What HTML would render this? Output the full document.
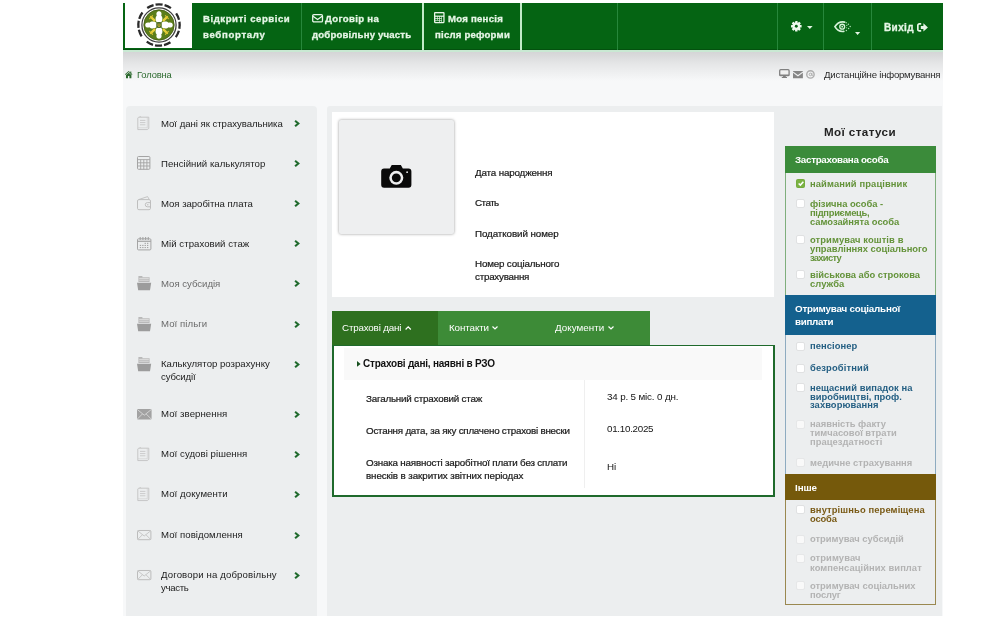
<!DOCTYPE html>
<html lang="uk"><head><meta charset="utf-8"><title>Пенсійний фонд — особистий кабінет</title>
<style>
*{box-sizing:border-box}
html,body{margin:0;padding:0}
body{width:992px;height:621px;background:#fff;position:relative;overflow:hidden;font-family:"Liberation Sans",sans-serif;color:#222}
.a{position:absolute}
.t{position:absolute;white-space:nowrap;line-height:1;will-change:transform}
svg{position:absolute;overflow:visible}
#wrap{left:123px;top:50px;width:820px;height:566px;background:#f7f8f9}
#grad{left:123px;top:51px;width:820px;height:30px;background:linear-gradient(#d3d4d5,#e6e7e8 45%,#f7f8f9)}
#mint{left:123px;top:50.4px;width:820px;height:1.4px;background:#c9e9d3}
#hdark{left:123px;top:48.6px;width:820px;height:1.8px;background:#04510f}
#hdr{left:123px;top:3px;width:820px;height:47px;background:#056413}
#logo{left:125px;top:3px;width:67px;height:45.4px;background:#fff}
.sep{position:absolute;top:3px;width:1px;height:47px;background:#27873b}
.sep.br{background:#c2ebc9;width:2px}
#lside{left:126px;top:105.5px;width:191px;height:510.5px;background:#eceeef;border-radius:4px 4px 0 0}
#center{left:327px;top:105.5px;width:448.5px;height:510.5px;background:#eceeef;border-radius:3px 0 0 0}
#rside{left:775px;top:105.5px;width:167px;height:510.5px;background:#eceeef}
#card{left:332px;top:112px;width:442px;height:184.5px;background:#fff}
#photo{left:338.8px;top:120px;width:115.6px;height:113.8px;background:#eeeff0;border-radius:2px;box-shadow:0 0 3px rgba(0,0,0,.42)}
#tabs{left:332px;top:311.2px;width:318px;height:34.5px;background:#3d8b37}
#tab1{left:332px;top:311.2px;width:105.5px;height:34.5px;background:#2e701f}
#panel{left:332px;top:345.2px;width:442.5px;height:152.3px;background:#fff;border:2px solid #1f6a2c;border-top-width:1px;border-bottom-width:2.5px}
#phead{left:344px;top:347.5px;width:418px;height:32.5px;background:#f9f9f9}
#vdiv{left:584.2px;top:380px;width:1px;height:108px;background:#efefef}
.sec{position:absolute;left:784.5px;width:151.5px}
.cb{position:absolute;left:796px;width:9px;height:9px;background:#fff;border:1px solid #e0e1e2;border-radius:2px}
.cb.dis{border-color:#e6e7e8;background:#f9f9f9}
</style></head><body>
<div class="a" id="wrap"></div><div class="a" id="grad"></div>
<div class="a" id="hdr"></div><div class="a" id="hdark"></div><div class="a" id="mint"></div><div class="a" id="logo"></div>
<div class="sep" style="left:300.7px"></div><div class="sep br" style="left:422px"></div><div class="sep br" style="left:520.3px"></div>
<div class="sep" style="left:617.3px"></div><div class="sep" style="left:777.3px"></div><div class="sep" style="left:823.3px"></div><div class="sep" style="left:871.2px"></div>
<div class="a" id="lside"></div><div class="a" id="center"></div><div class="a" id="rside"></div>
<div class="a" id="card"></div><div class="a" id="photo"></div>
<div class="a" id="tabs"></div><div class="a" id="tab1"></div><div class="a" id="panel"></div><div class="a" id="phead"></div><div class="a" id="vdiv"></div>
<!-- right status boxes -->
<div class="sec" style="top:145.5px;height:149px;border:1px solid #7fae7c;border-bottom:0;background:#eceeef"></div>
<div class="sec" style="top:145.5px;height:27px;background:#3b8b3a"></div>
<div class="sec" style="top:294.5px;height:180px;border:1px solid #8eabc0;border-bottom:0;background:#eceeef"></div>
<div class="sec" style="top:294.5px;height:40.5px;background:#14618e"></div>
<div class="sec" style="top:473.7px;height:131.4px;border:1px solid #9a8850;background:#eceeef"></div>
<div class="sec" style="top:473.7px;height:26.8px;background:#75590b"></div>
<!-- logo -->
<svg style="left:136px;top:2px" width="46" height="46" viewBox="-23 -23 46 46">
 <circle r="20.7" fill="none" stroke="#2a2a2a" stroke-width="2.3" stroke-dasharray="7 2 7 2 7 7.515" transform="rotate(-124.6)"/>
 <circle r="17.1" fill="none" stroke="#3c3c3c" stroke-width="1.25"/>
 <circle r="15.2" fill="#5b7d1a" stroke="#445c16" stroke-width="0.8"/>
 <g fill="#fff">
  <path d="M0-13.8C2.6-13.8 3-11 2.2-9.6C4-8 3.8-4.4 2-2.4H-2C-3.8-4.4-4-8-2.2-9.6C-3-11-2.6-13.8 0-13.8Z"/>
  <path d="M0-13.8C2.6-13.8 3-11 2.2-9.6C4-8 3.8-4.4 2-2.4H-2C-3.8-4.4-4-8-2.2-9.6C-3-11-2.6-13.8 0-13.8Z" transform="rotate(90)"/>
  <path d="M0-13.8C2.6-13.8 3-11 2.2-9.6C4-8 3.8-4.4 2-2.4H-2C-3.8-4.4-4-8-2.2-9.6C-3-11-2.6-13.8 0-13.8Z" transform="rotate(180)"/>
  <path d="M0-13.8C2.6-13.8 3-11 2.2-9.6C4-8 3.8-4.4 2-2.4H-2C-3.8-4.4-4-8-2.2-9.6C-3-11-2.6-13.8 0-13.8Z" transform="rotate(270)"/>
 </g>
 <g stroke="#e6cf3a" stroke-width="2.4" stroke-linecap="round">
  <path d="M-8-8L-4.6-4.6M8-8L4.6-4.6M-8 8L-4.6 4.6M8 8L4.6 4.6"/>
 </g>
 <g stroke="#d9bf2e" stroke-width="1.1" stroke-linecap="round"><path d="M-9.4-6.4L-6.4-9.4M9.4-6.4L6.4-9.4M-9.4 6.4L-6.4 9.4M9.4 6.4L6.4 9.4"/></g>
 <rect x="-2.6" y="-2.9" width="5.2" height="5.8" rx="1.6" fill="#4b6c2c"/><path d="M-1.1-1.4V1L0 1.9L1.1 1V-1.4M0-1.6V1.8" fill="none" stroke="#c9b22f" stroke-width=".7"/>
</svg>
<!-- header: envelope outline -->
<svg style="left:312px;top:14.3px" width="11.2" height="8.6" viewBox="0 0 11.2 8.6"><rect x=".7" y=".7" width="9.8" height="7.2" rx="1.2" fill="none" stroke="#eaf6ea" stroke-width="1.3"/><path d="M1 2.2L5.6 5.6L10.2 2.2" fill="none" stroke="#eaf6ea" stroke-width="1.2"/></svg>
<!-- header: calculator -->
<svg style="left:434.3px;top:12.4px" width="10.6" height="11.2" viewBox="0 0 10 10" preserveAspectRatio="none"><rect width="10" height="10" rx="1" fill="#eaf6ea"/><rect x="1.2" y="1.2" width="7.6" height="2" fill="#056413"/><g fill="#056413"><rect x="1.3" y="4.3" width="1.5" height="1.2"/><rect x="3.4" y="4.3" width="1.5" height="1.2"/><rect x="5.5" y="4.3" width="1.5" height="1.2"/><rect x="7.5" y="4.3" width="1.3" height="4.6"/><rect x="1.3" y="6.1" width="1.5" height="1.2"/><rect x="3.4" y="6.1" width="1.5" height="1.2"/><rect x="5.5" y="6.1" width="1.5" height="1.2"/><rect x="1.3" y="7.8" width="3.6" height="1.1"/><rect x="5.5" y="7.8" width="1.5" height="1.1"/></g></svg>
<!-- gear -->
<svg style="left:790.7px;top:21.4px" width="10.6" height="10.6" viewBox="-5.3 -5.3 10.6 10.6"><g fill="#eefaee"><circle r="3.75"/><rect x="-1.25" y="-5.3" width="2.5" height="10.6" rx=".5"/><rect x="-1.25" y="-5.3" width="2.5" height="10.6" rx=".5" transform="rotate(45)"/><rect x="-1.25" y="-5.3" width="2.5" height="10.6" rx=".5" transform="rotate(90)"/><rect x="-1.25" y="-5.3" width="2.5" height="10.6" rx=".5" transform="rotate(135)"/></g><circle r="1.45" fill="#056413"/></svg>
<svg style="left:806.8px;top:26.2px" width="5.6" height="3" viewBox="0 0 5.6 3"><path d="M0 0H5.6L2.8 3Z" fill="#e3f5e3"/></svg>
<!-- eye low vision -->
<svg style="left:834px;top:21.2px" width="17.4" height="11.4" viewBox="0 0 17.4 11.4"><path d="M10.6 1.1C6.2 .4 2.6 3 .9 5.7C2.6 8.6 6 10.9 9.8 10.4" fill="none" stroke="#d6f2d8" stroke-width="1.7" stroke-linecap="round"/><circle cx="8.2" cy="5.7" r="2.45" fill="none" stroke="#d6f2d8" stroke-width="1.3"/><circle cx="8.2" cy="5.7" r=".9" fill="#d6f2d8"/><g fill="#a9dcae"><circle cx="12.2" cy="1.7" r=".75"/><circle cx="14.4" cy="3.2" r=".75"/><circle cx="16.2" cy="5.4" r=".75"/><circle cx="12.8" cy="4.4" r=".6"/><circle cx="14.6" cy="7.6" r=".75"/><circle cx="12.4" cy="9.6" r=".75"/><circle cx="12.6" cy="6.8" r=".55"/></g></svg>
<svg style="left:855.4px;top:32px" width="5.2" height="3" viewBox="0 0 5.2 3"><path d="M0 0H5.2L2.6 3Z" fill="#e3f5e3"/></svg>
<!-- sign-out -->
<svg style="left:917px;top:22.6px" width="11" height="8.8" viewBox="0 0 11 8.8"><path d="M4.2 .85H2.3A1.45 1.45 0 0 0 .85 2.3V6.5A1.45 1.45 0 0 0 2.3 7.95H4.2" fill="none" stroke="#e6f6e6" stroke-width="1.7"/><path d="M3.8 2.9H6.4V.3L10.9 4.4L6.4 8.5V5.9H3.8Z" fill="#e6f6e6"/></svg>
<!-- home -->
<svg style="left:125.4px;top:70.6px" width="7.4" height="7.2" viewBox="0 0 7.4 7.2"><path d="M3.7 0L0 3.3L.5 3.9L3.7 1.1L6.9 3.9L7.4 3.3L6.3 2.3V.5H5.3V1.4Z" fill="#2c6a2f"/><path d="M3.7 1.8L1 4.1V7.2H3V5.1H4.4V7.2H6.4V4.1Z" fill="#2c6a2f"/></svg>
<!-- monitor, mail, at -->
<svg style="left:779px;top:69.2px" width="10.8" height="9" viewBox="0 0 10.8 9"><rect x=".7" y=".7" width="9.4" height="6" rx="1" fill="#f0f0f0" stroke="#808080" stroke-width="1.3"/><path d="M.7 5.4H10.1V6.2A.6 .6 0 0 1 9.5 6.8H1.3A.6 .6 0 0 1 .7 6.2Z" fill="#808080"/><path d="M4.2 7H6.6L7 8.1H8V9H2.8V8.1H3.8Z" fill="#808080"/></svg>
<svg style="left:793.2px;top:70.8px" width="9.9" height="7.2" viewBox="0 0 9.9 7.2"><path d="M0 .5L4.95 4.1L9.9 .5V0H0Z" fill="#868686"/><path d="M0 1.8V7.2H9.9V1.8L4.95 5.4Z" fill="#868686"/></svg>
<svg style="left:806.2px;top:69.7px" width="8.9" height="8.9" viewBox="-4.45 -4.45 8.9 8.9"><circle r="3.7" fill="none" stroke="#adadad" stroke-width="1.4"/><circle r="1.3" fill="none" stroke="#adadad" stroke-width="1"/><path d="M1.4-1.5V.6Q1.6 1.6 2.8 1.2" fill="none" stroke="#adadad" stroke-width=".9"/></svg>
<!-- camera -->
<svg style="left:381.2px;top:165px" width="30.6" height="22.8" viewBox="0 0 31 23.4"><path d="M10.8 0H20.2L22.2 3.6H28A3 3 0 0 1 31 6.6V20.4A3 3 0 0 1 28 23.4H3A3 3 0 0 1 0 20.4V6.6A3 3 0 0 1 3 3.6H8.8Z" fill="#0a0a0a"/><circle cx="15.5" cy="13.2" r="7.2" fill="#eeeff0"/><circle cx="15.5" cy="13.2" r="4.6" fill="#0a0a0a"/><circle cx="26.6" cy="7.4" r=".9" fill="#eeeff0"/></svg>
<!-- tab chevrons -->
<svg style="left:405px;top:325.6px" width="6.4" height="4" viewBox="0 0 6.4 4"><path d="M.6 3.5L3.2 .9L5.8 3.5" fill="none" stroke="#fff" stroke-width="1.2"/></svg>
<svg style="left:492.2px;top:325.8px" width="6" height="3.8" viewBox="0 0 6 3.8"><path d="M.5 .5L3 3L5.5 .5" fill="none" stroke="#fff" stroke-width="1.2"/></svg>
<svg style="left:607.8px;top:325.8px" width="6" height="3.8" viewBox="0 0 6 3.8"><path d="M.5 .5L3 3L5.5 .5" fill="none" stroke="#fff" stroke-width="1.2"/></svg>
<svg style="left:357px;top:360.6px" width="3.6" height="5.8" viewBox="0 0 3.6 5.8"><path d="M0 0L3.6 2.9L0 5.8Z" fill="#17501f"/></svg>

<svg style="left:137px;top:116.3px" width="12.6" height="14.2" viewBox="0 0 12.6 14.2"><path d="M1.6 1.2H11.8V12.4L10.2 13.6H.8V2Z" fill="none" stroke="#c2c2c2" stroke-width=".9"/><path d="M2.6 1.2L3.2 .3L4 1.2" fill="none" stroke="#c2c2c2" stroke-width=".7"/><path d="M10.3 1.6V11.8H1.2" fill="none" stroke="#c2c2c2" stroke-width=".5"/><path d="M3 4.4H8.4M3 6.6H8.4M3 8.8H8.4" stroke="#c2c2c2" stroke-width=".8"/></svg>
<svg style="left:136.8px;top:156.3px" width="13.4" height="13.8" viewBox="0 0 13.4 13.8"><rect x=".5" y=".5" width="12.4" height="12.8" rx="1" fill="none" stroke="#a4a4a4" stroke-width="1"/><path d="M.5 3.6H12.9M.5 6.8H12.9M.5 10H12.9M3.7 3.6V13.3M6.8 3.6V13.3M9.9 3.6V13.3" stroke="#a4a4a4" stroke-width=".9"/></svg>
<svg style="left:136.8px;top:196.4px" width="15.2" height="14.2" viewBox="0 0 15.2 14.2"><rect x=".5" y="3.6" width="13" height="10.1" rx="1.4" fill="none" stroke="#bebebe" stroke-width="1"/><path d="M1.6 3.6L10.6 .6L12.2 3.4" fill="none" stroke="#bebebe" stroke-width=".9"/><path d="M13.5 6.6H10.4A2 2 0 0 0 10.4 10.8H13.5" fill="none" stroke="#bebebe" stroke-width="1"/><circle cx="10.8" cy="8.7" r=".7" fill="#bebebe"/></svg>
<svg style="left:137px;top:237px" width="14.4" height="13.4" viewBox="0 0 14.4 13.4"><rect x=".5" y="1.8" width="13.4" height="11.1" rx="1" fill="none" stroke="#a4a4a4" stroke-width="1"/><path d="M.5 4.3H13.9" stroke="#a4a4a4" stroke-width="1.2"/><path d="M3.2 0V3M5.9 0V3M8.6 0V3M11.3 0V3" stroke="#a4a4a4" stroke-width="1.1"/><g fill="#a4a4a4"><rect x="7.6" y="5.8" width="1.3" height="1.1"/><rect x="10" y="5.8" width="1.3" height="1.1"/><rect x="2.8" y="7.9" width="1.3" height="1.1"/><rect x="5.2" y="7.9" width="1.3" height="1.1"/><rect x="7.6" y="7.9" width="1.3" height="1.1"/><rect x="10" y="7.9" width="1.3" height="1.1"/><rect x="2.8" y="10" width="1.3" height="1.1"/><rect x="5.2" y="10" width="1.3" height="1.1"/><rect x="7.6" y="10" width="1.3" height="1.1"/><rect x="10" y="10" width="1.3" height="1.1"/></g></svg>
<svg style="left:137.2px;top:276.4px" width="14.2" height="14.2" viewBox="0 0 14.2 14.2"><path d="M1.4 0H5.4V1.2H12.6V6H1.4Z" fill="#b9b9b9"/><path d="M2.2 2.4H11.8M2.2 4.2H11.8" stroke="#e6e6e6" stroke-width=".8"/><path d="M0 6.8H14.2L13 14.2H1.2Z" fill="#9c9c9c"/></svg>
<svg style="left:137.2px;top:317px" width="14.2" height="14.2" viewBox="0 0 14.2 14.2"><path d="M1.4 0H5.4V1.2H12.6V6H1.4Z" fill="#b9b9b9"/><path d="M2.2 2.4H11.8M2.2 4.2H11.8" stroke="#e6e6e6" stroke-width=".8"/><path d="M0 6.8H14.2L13 14.2H1.2Z" fill="#9c9c9c"/></svg>
<svg style="left:137.2px;top:357px" width="14.2" height="14.2" viewBox="0 0 14.2 14.2"><path d="M1.4 0H5.4V1.2H12.6V6H1.4Z" fill="#b9b9b9"/><path d="M2.2 2.4H11.8M2.2 4.2H11.8" stroke="#e6e6e6" stroke-width=".8"/><path d="M0 6.8H14.2L13 14.2H1.2Z" fill="#9c9c9c"/></svg>
<svg style="left:137px;top:409px" width="14.6" height="10.4" viewBox="0 0 14.6 10.4"><rect width="14.6" height="10.4" rx="1" fill="#a2a2a2"/><path d="M.4 .6L7.3 6.2L14.2 .6M.4 10L5.4 5M14.2 10L9.2 5" fill="none" stroke="#dedede" stroke-width=".8"/></svg>
<svg style="left:137px;top:447.3px" width="12.6" height="14.2" viewBox="0 0 12.6 14.2"><path d="M1.6 1.2H11.8V12.4L10.2 13.6H.8V2Z" fill="none" stroke="#c2c2c2" stroke-width=".9"/><path d="M2.6 1.2L3.2 .3L4 1.2" fill="none" stroke="#c2c2c2" stroke-width=".7"/><path d="M10.3 1.6V11.8H1.2" fill="none" stroke="#c2c2c2" stroke-width=".5"/><path d="M3 4.4H8.4M3 6.6H8.4M3 8.8H8.4" stroke="#c2c2c2" stroke-width=".8"/></svg>
<svg style="left:137px;top:487.3px" width="12.6" height="14.2" viewBox="0 0 12.6 14.2"><path d="M1.6 1.2H11.8V12.4L10.2 13.6H.8V2Z" fill="none" stroke="#c2c2c2" stroke-width=".9"/><path d="M2.6 1.2L3.2 .3L4 1.2" fill="none" stroke="#c2c2c2" stroke-width=".7"/><path d="M10.3 1.6V11.8H1.2" fill="none" stroke="#c2c2c2" stroke-width=".5"/><path d="M3 4.4H8.4M3 6.6H8.4M3 8.8H8.4" stroke="#c2c2c2" stroke-width=".8"/></svg>
<svg style="left:137px;top:530px" width="14.4" height="10.2" viewBox="0 0 14.4 10.2"><rect x=".5" y=".5" width="13.4" height="9.2" rx="1" fill="none" stroke="#bcbcbc" stroke-width="1"/><path d="M.8 .9L7.2 6L13.6 .9M.8 9.4L5.4 4.8M13.6 9.4L9 4.8" fill="none" stroke="#bcbcbc" stroke-width=".8"/></svg>
<svg style="left:137px;top:570px" width="14.4" height="10.2" viewBox="0 0 14.4 10.2"><rect x=".5" y=".5" width="13.4" height="9.2" rx="1" fill="none" stroke="#bcbcbc" stroke-width="1"/><path d="M.8 .9L7.2 6L13.6 .9M.8 9.4L5.4 4.8M13.6 9.4L9 4.8" fill="none" stroke="#bcbcbc" stroke-width=".8"/></svg>
<svg style="left:294.1px;top:120.0px" width="5.9" height="7" viewBox="0 0 5.4 6.4"><path d="M1 .6L4 3.2L1 5.8" fill="none" stroke="#1f6a2c" stroke-width="1.9"/></svg>
<svg style="left:294.1px;top:160.2px" width="5.9" height="7" viewBox="0 0 5.4 6.4"><path d="M1 .6L4 3.2L1 5.8" fill="none" stroke="#1f6a2c" stroke-width="1.9"/></svg>
<svg style="left:294.1px;top:200.2px" width="5.9" height="7" viewBox="0 0 5.4 6.4"><path d="M1 .6L4 3.2L1 5.8" fill="none" stroke="#1f6a2c" stroke-width="1.9"/></svg>
<svg style="left:294.1px;top:240.2px" width="5.9" height="7" viewBox="0 0 5.4 6.4"><path d="M1 .6L4 3.2L1 5.8" fill="none" stroke="#1f6a2c" stroke-width="1.9"/></svg>
<svg style="left:294.1px;top:280.2px" width="5.9" height="7" viewBox="0 0 5.4 6.4"><path d="M1 .6L4 3.2L1 5.8" fill="none" stroke="#1f6a2c" stroke-width="1.9"/></svg>
<svg style="left:294.1px;top:320.7px" width="5.9" height="7" viewBox="0 0 5.4 6.4"><path d="M1 .6L4 3.2L1 5.8" fill="none" stroke="#1f6a2c" stroke-width="1.9"/></svg>
<svg style="left:294.1px;top:360.7px" width="5.9" height="7" viewBox="0 0 5.4 6.4"><path d="M1 .6L4 3.2L1 5.8" fill="none" stroke="#1f6a2c" stroke-width="1.9"/></svg>
<svg style="left:294.1px;top:411.0px" width="5.9" height="7" viewBox="0 0 5.4 6.4"><path d="M1 .6L4 3.2L1 5.8" fill="none" stroke="#1f6a2c" stroke-width="1.9"/></svg>
<svg style="left:294.1px;top:451.0px" width="5.9" height="7" viewBox="0 0 5.4 6.4"><path d="M1 .6L4 3.2L1 5.8" fill="none" stroke="#1f6a2c" stroke-width="1.9"/></svg>
<svg style="left:294.1px;top:491.0px" width="5.9" height="7" viewBox="0 0 5.4 6.4"><path d="M1 .6L4 3.2L1 5.8" fill="none" stroke="#1f6a2c" stroke-width="1.9"/></svg>
<svg style="left:294.1px;top:531.5px" width="5.9" height="7" viewBox="0 0 5.4 6.4"><path d="M1 .6L4 3.2L1 5.8" fill="none" stroke="#1f6a2c" stroke-width="1.9"/></svg>
<svg style="left:294.1px;top:571.5px" width="5.9" height="7" viewBox="0 0 5.4 6.4"><path d="M1 .6L4 3.2L1 5.8" fill="none" stroke="#1f6a2c" stroke-width="1.9"/></svg>
<div class="cb" style="top:179px;background:#7bb242;border-color:#74ab3c;border-radius:1.5px"></div>
<svg style="left:797.5px;top:181.2px" width="6" height="5" viewBox="0 0 5.6 4.6"><path d="M.6 2.3L2.2 3.8L5 .7" fill="none" stroke="#fff" stroke-width="1.4"/></svg>
<div class="cb" style="top:198.6px"></div>
<div class="cb" style="top:234.5px"></div>
<div class="cb" style="top:270.2px"></div>
<div class="cb" style="top:342px"></div>
<div class="cb" style="top:363.8px"></div>
<div class="cb" style="top:383.2px"></div>
<div class="cb" style="top:505px"></div>
<div class="cb dis" style="top:419.5px"></div>
<div class="cb dis" style="top:458.2px"></div>
<div class="cb dis" style="top:534.5px"></div>
<div class="cb dis" style="top:554px"></div>
<div class="cb dis" style="top:581px"></div>
<header class="site-header">
<span class="t" style="left:203.2px;top:14px;font-size:9.6px;color:#e6f6e6;font-weight:bold;letter-spacing:0.543px;-webkit-text-stroke:0.3px #e6f6e6">Відкриті сервіси</span>
<span class="t" style="left:203.2px;top:30px;font-size:9.6px;color:#e6f6e6;font-weight:bold;letter-spacing:0.686px;-webkit-text-stroke:0.3px #e6f6e6">вебпорталу</span>
<span class="t" style="left:325.3px;top:14px;font-size:9.6px;color:#e6f6e6;font-weight:bold;letter-spacing:0.343px;-webkit-text-stroke:0.3px #e6f6e6">Договір на</span>
<span class="t" style="left:312.0px;top:30px;font-size:9.6px;color:#e6f6e6;font-weight:bold;letter-spacing:0.171px;-webkit-text-stroke:0.3px #e6f6e6">добровільну участь</span>
<span class="t" style="left:448.0px;top:14px;font-size:9.6px;color:#e6f6e6;font-weight:bold;letter-spacing:0.248px;-webkit-text-stroke:0.3px #e6f6e6">Моя пенсія</span>
<span class="t" style="left:435.0px;top:30px;font-size:9.6px;color:#e6f6e6;font-weight:bold;letter-spacing:0.214px;-webkit-text-stroke:0.3px #e6f6e6">після реформи</span>
<span class="t" style="left:883.5px;top:23px;font-size:10px;color:#e6f6e6;font-weight:bold;letter-spacing:0.388px;-webkit-text-stroke:0.3px #e6f6e6">Вихід</span>
</header>
<div class="breadcrumbs">
<span class="t" style="left:136.5px;top:70px;font-size:9.4px;color:#2c6a2f;letter-spacing:-0.132px">Головна</span>
<span class="t" style="left:824.0px;top:70px;font-size:9.6px;color:#2a2a2a;letter-spacing:-0.220px">Дистанційне інформування</span>
</div>
<nav class="side-menu">
<span class="t" style="left:161.2px;top:119px;font-size:9.6px;color:#1c1c1c;letter-spacing:-0.032px">Мої дані як страхувальника</span>
<span class="t" style="left:161.2px;top:159px;font-size:9.6px;color:#1c1c1c;letter-spacing:0.039px">Пенсійний калькулятор</span>
<span class="t" style="left:161.2px;top:199px;font-size:9.6px;color:#1c1c1c;letter-spacing:-0.040px">Моя заробітна плата</span>
<span class="t" style="left:161.2px;top:239px;font-size:9.6px;color:#1c1c1c;letter-spacing:0.052px">Мій страховий стаж</span>
<span class="t" style="left:161.2px;top:279px;font-size:9.6px;color:#6a6a6a;letter-spacing:-0.014px">Моя субсидія</span>
<span class="t" style="left:161.2px;top:319px;font-size:9.6px;color:#6a6a6a;letter-spacing:0.074px">Мої пільги</span>
<span class="t" style="left:161.2px;top:359px;font-size:9.6px;color:#1c1c1c;letter-spacing:0.015px">Калькулятор розрахунку</span>
<span class="t" style="left:161.2px;top:372px;font-size:9.6px;color:#1c1c1c;letter-spacing:-0.143px">субсидії</span>
<span class="t" style="left:161.2px;top:409px;font-size:9.6px;color:#1c1c1c;letter-spacing:0.081px">Мої звернення</span>
<span class="t" style="left:161.2px;top:449px;font-size:9.6px;color:#1c1c1c;letter-spacing:0.063px">Мої судові рішення</span>
<span class="t" style="left:161.2px;top:489px;font-size:9.6px;color:#1c1c1c;letter-spacing:0.086px">Мої документи</span>
<span class="t" style="left:161.2px;top:530px;font-size:9.6px;color:#1c1c1c;letter-spacing:0.064px">Мої повідомлення</span>
<span class="t" style="left:161.2px;top:570px;font-size:9.6px;color:#1c1c1c;letter-spacing:0.140px">Договори на добровільну</span>
<span class="t" style="left:161.2px;top:583px;font-size:9.6px;color:#1c1c1c;letter-spacing:-0.305px">участь</span>
</nav>
<section class="profile-card">
<span class="t" style="left:474.5px;top:168px;font-size:9.8px;color:#1a1a1a;letter-spacing:-0.154px;-webkit-text-stroke:0.22px #1a1a1a">Дата народження</span>
<span class="t" style="left:474.5px;top:198px;font-size:9.8px;color:#1a1a1a;letter-spacing:-0.516px;-webkit-text-stroke:0.22px #1a1a1a">Стать</span>
<span class="t" style="left:474.5px;top:229px;font-size:9.8px;color:#1a1a1a;letter-spacing:-0.089px;-webkit-text-stroke:0.22px #1a1a1a">Податковий номер</span>
<span class="t" style="left:474.5px;top:259px;font-size:9.8px;color:#1a1a1a;letter-spacing:-0.168px;-webkit-text-stroke:0.22px #1a1a1a">Номер соціального</span>
<span class="t" style="left:474.5px;top:272px;font-size:9.8px;color:#1a1a1a;letter-spacing:-0.232px;-webkit-text-stroke:0.22px #1a1a1a">страхування</span>
</section>
<section class="insurance-tabs">
<span class="t" style="left:342.0px;top:323px;font-size:9.8px;color:#fff;letter-spacing:-0.182px">Страхові дані</span>
<span class="t" style="left:448.7px;top:323px;font-size:9.8px;color:#fff;letter-spacing:-0.094px">Контакти</span>
<span class="t" style="left:554.5px;top:323px;font-size:9.8px;color:#fff;letter-spacing:0.029px">Документи</span>
<span class="t" style="left:363.2px;top:359px;font-size:10px;color:#111;font-weight:bold;letter-spacing:-0.221px">Страхові дані, наявні в РЗО</span>
<span class="t" style="left:365.7px;top:394px;font-size:9.8px;color:#1a1a1a;letter-spacing:-0.198px;-webkit-text-stroke:0.22px #1a1a1a">Загальний страховий стаж</span>
<span class="t" style="left:365.7px;top:426px;font-size:9.8px;color:#1a1a1a;letter-spacing:-0.227px;-webkit-text-stroke:0.22px #1a1a1a">Остання дата, за яку сплачено страхові внески</span>
<span class="t" style="left:365.7px;top:458px;font-size:9.8px;color:#1a1a1a;letter-spacing:-0.188px;-webkit-text-stroke:0.22px #1a1a1a">Ознака наявності заробітної плати без сплати</span>
<span class="t" style="left:365.7px;top:471px;font-size:9.8px;color:#1a1a1a;letter-spacing:-0.093px;-webkit-text-stroke:0.22px #1a1a1a">внесків в закритих звітних періодах</span>
<span class="t" style="left:606.7px;top:392px;font-size:9.8px;color:#151515;letter-spacing:-0.148px">34 р. 5 міс. 0 дн.</span>
<span class="t" style="left:606.7px;top:424px;font-size:9.8px;color:#151515;letter-spacing:-0.275px">01.10.2025</span>
<span class="t" style="left:606.7px;top:462px;font-size:9.8px;color:#151515;letter-spacing:-0.133px">Ні</span>
</section>
<aside class="my-statuses">
<span class="t" style="left:824.0px;top:126px;font-size:11.6px;color:#222;font-weight:bold;letter-spacing:0.409px">Мої статуси</span>
<span class="t" style="left:795.2px;top:155px;font-size:9.8px;color:#fff;font-weight:bold;letter-spacing:-0.299px">Застрахована особа</span>
<span class="t" style="left:809.7px;top:179px;font-size:9.4px;color:#64933a;font-weight:bold;letter-spacing:0.110px">найманий працівник</span>
<span class="t" style="left:809.7px;top:199px;font-size:9.4px;color:#64933a;font-weight:bold;letter-spacing:-0.029px">фізична особа -</span>
<span class="t" style="left:809.7px;top:208px;font-size:9.4px;color:#64933a;font-weight:bold;letter-spacing:-0.294px">підприємець,</span>
<span class="t" style="left:809.7px;top:217px;font-size:9.4px;color:#64933a;font-weight:bold;letter-spacing:-0.015px">самозайнята особа</span>
<span class="t" style="left:809.7px;top:235px;font-size:9.4px;color:#64933a;font-weight:bold;letter-spacing:0.100px">отримувач коштів в</span>
<span class="t" style="left:809.7px;top:244px;font-size:9.4px;color:#64933a;font-weight:bold;letter-spacing:-0.012px">управліннях соціального</span>
<span class="t" style="left:809.7px;top:253px;font-size:9.4px;color:#64933a;font-weight:bold;letter-spacing:-0.712px">захисту</span>
<span class="t" style="left:809.7px;top:270px;font-size:9.4px;color:#64933a;font-weight:bold;letter-spacing:-0.028px">військова або строкова</span>
<span class="t" style="left:809.7px;top:279px;font-size:9.4px;color:#64933a;font-weight:bold;letter-spacing:0.045px">служба</span>
<span class="t" style="left:795.2px;top:304px;font-size:9.8px;color:#fff;font-weight:bold;letter-spacing:-0.202px">Отримувач соціальної</span>
<span class="t" style="left:795.2px;top:317px;font-size:9.8px;color:#fff;font-weight:bold;letter-spacing:-0.310px">виплати</span>
<span class="t" style="left:809.7px;top:341px;font-size:9.4px;color:#245f83;font-weight:bold;letter-spacing:0.068px">пенсіонер</span>
<span class="t" style="left:809.7px;top:363px;font-size:9.4px;color:#245f83;font-weight:bold;letter-spacing:0.137px">безробітний</span>
<span class="t" style="left:809.7px;top:383px;font-size:9.4px;color:#245f83;font-weight:bold;letter-spacing:0.058px">нещасний випадок на</span>
<span class="t" style="left:809.7px;top:392px;font-size:9.4px;color:#245f83;font-weight:bold;letter-spacing:-0.015px">виробництві, проф.</span>
<span class="t" style="left:809.7px;top:400px;font-size:9.4px;color:#245f83;font-weight:bold;letter-spacing:0.065px">захворювання</span>
<span class="t" style="left:809.7px;top:419px;font-size:9.4px;color:#b3b3b3;font-weight:bold;letter-spacing:-0.047px">наявність факту</span>
<span class="t" style="left:809.7px;top:428px;font-size:9.4px;color:#b3b3b3;font-weight:bold;letter-spacing:-0.014px">тимчасової втрати</span>
<span class="t" style="left:809.7px;top:437px;font-size:9.4px;color:#b3b3b3;font-weight:bold;letter-spacing:0.045px">працездатності</span>
<span class="t" style="left:809.7px;top:458px;font-size:9.4px;color:#b3b3b3;font-weight:bold;letter-spacing:0.030px">медичне страхування</span>
<span class="t" style="left:795.2px;top:483px;font-size:9.8px;color:#fff;font-weight:bold;letter-spacing:-0.066px">Інше</span>
<span class="t" style="left:809.7px;top:505px;font-size:9.4px;color:#7a5b17;font-weight:bold;letter-spacing:0.110px">внутрішньо переміщена</span>
<span class="t" style="left:809.7px;top:514px;font-size:9.4px;color:#7a5b17;font-weight:bold;letter-spacing:-0.152px">особа</span>
<span class="t" style="left:809.7px;top:534px;font-size:9.4px;color:#b3b3b3;font-weight:bold;letter-spacing:0.007px">отримувач субсидій</span>
<span class="t" style="left:809.7px;top:553px;font-size:9.4px;color:#b3b3b3;font-weight:bold;letter-spacing:0.092px">отримувач</span>
<span class="t" style="left:809.7px;top:563px;font-size:9.4px;color:#b3b3b3;font-weight:bold;letter-spacing:0.061px">компенсаційних виплат</span>
<span class="t" style="left:809.7px;top:581px;font-size:9.4px;color:#b3b3b3;font-weight:bold;letter-spacing:0.017px">отримувач соціальних</span>
<span class="t" style="left:809.7px;top:590px;font-size:9.4px;color:#b3b3b3;font-weight:bold;letter-spacing:-0.156px">послуг</span>
</aside>
</body></html>
